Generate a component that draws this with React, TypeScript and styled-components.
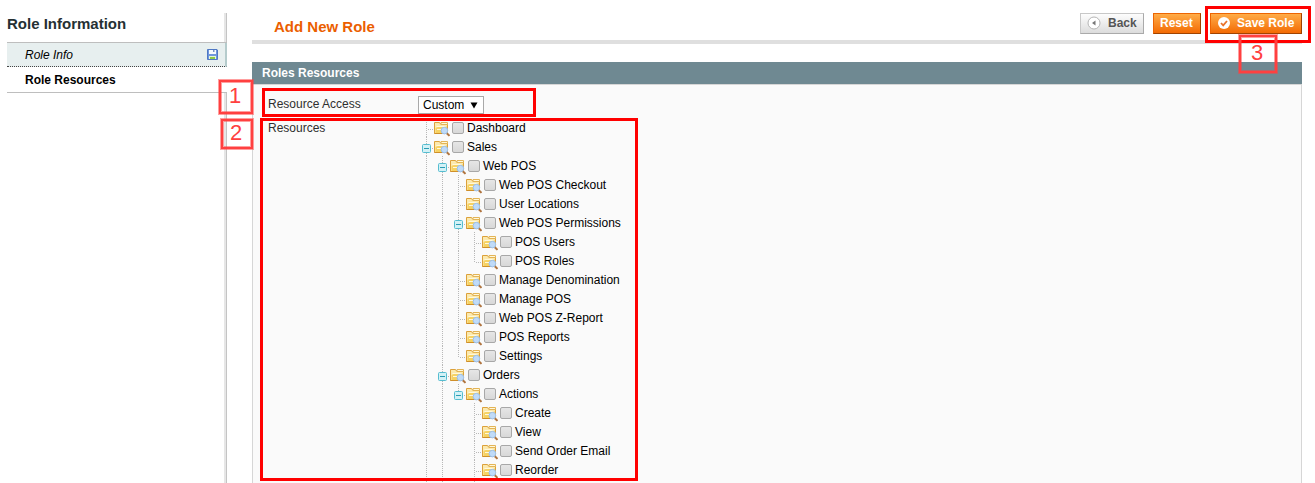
import React from 'react';
import styled, { createGlobalStyle, css } from 'styled-components';

const GlobalStyle = createGlobalStyle`
  * { box-sizing: border-box; }
  html, body { margin: 0; overflow: hidden; background: #fff; }
  body { font: 12px/19px "Liberation Sans", Arial, sans-serif; color: #2f2f2f; }
`;

const Page = styled.div`
  position: relative;
  display: flex;
  width: 1315px;
  height: 483px;
  padding: 13px 13px 0 7px;
  overflow: hidden;
`;

const Sidebar = styled.aside`
  display: flex;
  flex-direction: column;
  width: 220px;
  margin-right: 25px;
`;

const rail = css`
  border-right: 1px solid #c4c4c4;
  box-shadow: inset -2px 0 0 #e6e6e6;
`;

const SidebarTitle = styled.h3`
  ${rail}
  height: 29px;
  margin: 0;
  font-size: 15px;
  line-height: 21px;
  color: #253033;
`;

const TabList = styled.ul`
  margin: 0;
  padding: 0;
  list-style: none;
  border-top: 1px solid #bebebe;
  border-bottom: 1px solid #bebebe;
`;

const Tab = styled.li<{ $active?: boolean }>`
  display: flex;
  align-items: center;
  justify-content: space-between;
  height: ${p => (p.$active ? 25 : 24)}px;
  padding: 1px 7px 0 18px;
  color: #000;
  font-style: ${p => (p.$active ? 'normal' : 'italic')};
  font-weight: ${p => (p.$active ? 'bold' : 'normal')};
  background: ${p => (p.$active ? '#fff' : '#e7efef')};
  ${p => !p.$active && css`
    border-bottom: 1px dotted #444;
    border-right: 2px solid #b5cbcc;
  `}
`;

const RailFill = styled.div`
  ${rail}
  flex: 1;
`;

const Main = styled.main`
  display: flex;
  flex-direction: column;
  width: 1050px;
`;

const Header = styled.header`
  display: flex;
  align-items: flex-start;
  justify-content: space-between;
  height: 31px;
  padding-left: 22px;
  border-bottom: 4px solid #dfdfdf;
`;

const PageTitle = styled.h1`
  margin: 3px 0 0;
  font-size: 15px;
  line-height: 21px;
  color: #eb5e00;
`;

const Actions = styled.div`
  display: flex;
  gap: 9px;
`;

const Button = styled.button<{ $plain?: boolean; $width: number }>`
  display: flex;
  align-items: center;
  gap: ${p => (p.$plain ? 7 : 6)}px;
  width: ${p => p.$width}px;
  height: 21px;
  padding: 0 6px 1px;
  border: 1px solid;
  border-color: ${p => (p.$plain ? '#c8c8c8 #aaa #aaa #c8c8c8' : '#ed6502 #a04300 #a04300 #ed6502')};
  background: ${p => (p.$plain ? 'linear-gradient(#fdfdfd, #dcdcdc)' : 'linear-gradient(#ffac47, #f36b04)')};
  color: ${p => (p.$plain ? '#555' : '#fff')};
  font: bold 12px/16px "Liberation Sans", Arial, sans-serif;
  white-space: nowrap;
`;

const PanelHead = styled.div`
  height: 22px;
  margin-top: 18px;
  padding-left: 10px;
  background: #6f8992;
  color: #fff;
  font-weight: bold;
  line-height: 22px;
`;

const PanelBody = styled.section`
  flex: 1;
  min-height: 0;
  padding: 11px 0 0 15px;
  border: 1px solid #d6d6d6;
  border-bottom: 0;
  background: #fafafa;
`;

const Field = styled.div<{ $height?: number }>`
  display: flex;
  height: ${p => (p.$height ? p.$height + 'px' : 'auto')};
`;

const Label = styled.div`
  width: 150px;
  color: #2f2f2f;
  line-height: 17px;
`;

const ResourceLabel = styled(Label)`
  line-height: 20px;
`;

const Select = styled.div`
  display: flex;
  align-items: center;
  justify-content: space-between;
  width: 66px;
  height: 18px;
  padding: 0 5px 0 4px;
  border: 1px solid #a9a9a9;
  background: #fff;
  color: #000;
`;

const Tree = styled.div`
  display: flex;
  flex-direction: column;
`;

const TreeRow = styled.div`
  display: flex;
  height: 19px;
  color: #000;
  white-space: nowrap;
  line-height: 20px;
`;

const Check = styled.span`
  width: 12px;
  height: 12px;
  margin: 4px 3px 0 2px;
  border: 1px solid #a8a8a8;
  border-radius: 2px;
  background: linear-gradient(#e6e6e6, #d8d8d8);
`;

const Outline = styled.div<{ $x: number; $y: number; $w: number; $h: number }>`
  position: absolute;
  left: ${p => p.$x}px;
  top: ${p => p.$y}px;
  width: ${p => p.$w}px;
  height: ${p => p.$h}px;
  border: 3px solid #f00;
`;

const Marker = styled(Outline)`
  padding-right: 2px;
  border: 1px solid rgba(255, 64, 64, 0.5);
  box-shadow: inset 0 0 0 2px #ff4040, inset 0 0 0 3px rgba(255, 64, 64, 0.5);
  color: #ff4040;
  font-size: 22px;
  line-height: ${p => p.$h - 5}px;
  text-align: center;
`;

const Disk = styled.svg`
  margin-bottom: 2px;
`;

const DiskIcon = () => (
  <Disk width="11" height="11" viewBox="0 0 11 11">
    <path d="M.5.5h9.5l.5.5v9.5H.5z" fill="#6f97dd" stroke="#5078c4" />
    <path d="M2 1h7v4H2z" fill="#f5faff" />
    <path d="M6 1h1.5v2H6z" fill="#7590c5" />
    <path d="M2 7h7v3H2z" fill="#e8f7d4" />
    <path d="M3 8h5v2H3z" fill="#8ccb48" />
  </Disk>
);

const BackIcon = () => (
  <svg width="14" height="14" viewBox="0 0 14 14">
    <circle cx="7" cy="7" r="6" fill="#fff" stroke="#b5b5b5" />
    <path d="M8.5 4.5v5L5 7z" fill="#777" />
  </svg>
);

const SaveIcon = () => (
  <svg width="14" height="14" viewBox="0 0 14 14">
    <circle cx="7" cy="7" r="6" fill="#fff" />
    <path d="M4 7l2.2 2.3L10 5" fill="none" stroke="#e9732a" strokeWidth="1.8" />
  </svg>
);

const FolderIcon = () => (
  <svg width="16" height="19" viewBox="0 0 16 19">
    <path d="M.5 15.5v-11h5l1 1.5h7v9.5z" fill="#fbe9ae" stroke="#dca13a" />
    <path d="M7 4.5h6.5v2H7z" fill="#fff8db" stroke="#e3b457" />
    <path d="M1.5 15V10L5 8.5h8V15z" fill="#f6d262" />
    <path d="M2.5 8.5h9M3 11.5h4" stroke="#fff8dc" />
    <path d="M.5 15.5h9" stroke="#cf8f2a" />
    <path d="M12.8 15.2l2.7 2.7" stroke="#b0743f" strokeWidth="2" />
    <circle cx="10.4" cy="12.6" r="3.3" fill="#c0dbf8" stroke="#9cc0ea" />
  </svg>
);

type Guide = 'line' | 'none' | 'tee' | 'end' | 'open' | 'openEnd';

const GuideIcon = ({ kind }: { kind: Guide }) => {
  const open = kind === 'open' || kind === 'openEnd';
  const short = kind === 'end' || kind === 'openEnd';
  return (
    <svg width="16" height="19" viewBox="0 0 16 19">
      {kind !== 'none' && (
        <path d={short ? 'M8.5 0V12' : 'M8.5 0V19'} stroke="#b8b8b8" strokeDasharray="1 1" />
      )}
      {kind !== 'none' && kind !== 'line' && (
        <path d="M10 11.5H16" stroke="#b8b8b8" strokeDasharray="1 1" />
      )}
      {open && (
        <>
          <rect x="4.5" y="7.5" width="8" height="8" rx="1" fill="#d3f1f6" stroke="#55bdd0" />
          <path d="M6 11.5h5" stroke="#2a9bb3" />
        </>
      )}
    </svg>
  );
};

const rows: { label: string; guides: Guide[] }[] = [
  { label: 'Dashboard', guides: ['tee'] },
  { label: 'Sales', guides: ['open'] },
  { label: 'Web POS', guides: ['line', 'open'] },
  { label: 'Web POS Checkout', guides: ['line', 'line', 'tee'] },
  { label: 'User Locations', guides: ['line', 'line', 'tee'] },
  { label: 'Web POS Permissions', guides: ['line', 'line', 'open'] },
  { label: 'POS Users', guides: ['line', 'line', 'line', 'tee'] },
  { label: 'POS Roles', guides: ['line', 'line', 'line', 'end'] },
  { label: 'Manage Denomination', guides: ['line', 'line', 'tee'] },
  { label: 'Manage POS', guides: ['line', 'line', 'tee'] },
  { label: 'Web POS Z-Report', guides: ['line', 'line', 'tee'] },
  { label: 'POS Reports', guides: ['line', 'line', 'tee'] },
  { label: 'Settings', guides: ['line', 'line', 'end'] },
  { label: 'Orders', guides: ['line', 'open'] },
  { label: 'Actions', guides: ['line', 'line', 'openEnd'] },
  { label: 'Create', guides: ['line', 'line', 'none', 'tee'] },
  { label: 'View', guides: ['line', 'line', 'none', 'tee'] },
  { label: 'Send Order Email', guides: ['line', 'line', 'none', 'tee'] },
  { label: 'Reorder', guides: ['line', 'line', 'none', 'tee'] },
  { label: '', guides: ['line', 'line', 'none', 'line'] },
];

export default function App() {
  return (
    <>
      <GlobalStyle />
      <Page>
        <Sidebar>
          <SidebarTitle>Role Information</SidebarTitle>
          <TabList>
            <Tab>Role Info <DiskIcon /></Tab>
            <Tab $active>Role Resources</Tab>
          </TabList>
          <RailFill />
        </Sidebar>
        <Main>
          <Header>
            <PageTitle>Add New Role</PageTitle>
            <Actions>
              <Button $plain $width={64}><BackIcon />Back</Button>
              <Button $width={48}>Reset</Button>
              <Button $width={92}><SaveIcon />Save Role</Button>
            </Actions>
          </Header>
          <PanelHead>Roles Resources</PanelHead>
          <PanelBody>
            <Field $height={22}>
              <Label>Resource Access</Label>
              <Select>
                Custom
                <svg width="8" height="7" viewBox="0 0 8 7"><path d="M.5 0.5h7L4 6.5z" fill="#000" /></svg>
              </Select>
            </Field>
            <Field>
              <ResourceLabel>Resources</ResourceLabel>
              <Tree>
                {rows.map((row, i) => (
                  <TreeRow key={i}>
                    {row.guides.map((kind, g) => <GuideIcon key={g} kind={kind} />)}
                    {row.label && <><FolderIcon /><Check />{row.label}</>}
                  </TreeRow>
                ))}
              </Tree>
            </Field>
          </PanelBody>
        </Main>
        <Outline $x={262} $y={88} $w={274} $h={29} />
        <Outline $x={260} $y={118} $w={378} $h={363} />
        <Outline $x={1205} $y={6} $w={106} $h={37} />
        <Marker $x={218} $y={79} $w={36} $h={36}>1</Marker>
        <Marker $x={220} $y={118} $w={34} $h={32}>2</Marker>
        <Marker $x={1238} $y={34} $w={40} $h={40}>3</Marker>
      </Page>
    </>
  );
}
